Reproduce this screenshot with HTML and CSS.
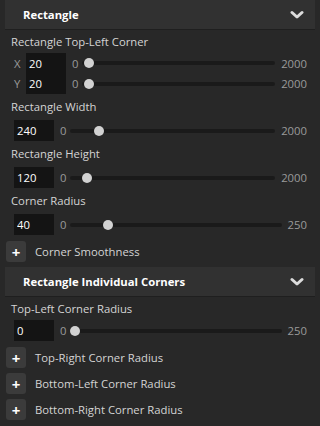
FILE: index.html
```html
<!DOCTYPE html>
<html lang="en">
<head>
    <meta charset="UTF-8">
    <meta name="viewport" content="width=device-width, initial-scale=1.0">
    <title>Rectangle properties</title>
    <link rel="stylesheet" href="styles.css">
</head>
<body>
    <div class="panel">
        <div class="section-header">
            <span>Rectangle</span>
            <svg class="chevron" width="14" height="10" viewBox="0 0 14 10"><polyline points="2,2.5 7,7 12,2.5" /></svg>
        </div>

        <div class="field first">
            <div class="field-label">Rectangle Top-Left Corner</div>
            <div class="xy">
                <div class="control">
                    <span class="axis">X</span>
                    <input class="num axis-num" type="text" value="20">
                    <span class="min">0</span>
                    <div class="track"><span class="knob" style="--v:0.01"></span></div>
                    <span class="max">2000</span>
                </div>
                <div class="control">
                    <span class="axis">Y</span>
                    <input class="num axis-num" type="text" value="20">
                    <span class="min">0</span>
                    <div class="track"><span class="knob" style="--v:0.01"></span></div>
                    <span class="max">2000</span>
                </div>
            </div>
        </div>

        <div class="field">
            <div class="field-label">Rectangle Width</div>
            <div class="control">
                <input class="num" type="text" value="240">
                <span class="min">0</span>
                <div class="track"><span class="knob" style="--v:0.12"></span></div>
                <span class="max">2000</span>
            </div>
        </div>

        <div class="field">
            <div class="field-label">Rectangle Height</div>
            <div class="control">
                <input class="num" type="text" value="120">
                <span class="min">0</span>
                <div class="track"><span class="knob" style="--v:0.06"></span></div>
                <span class="max">2000</span>
            </div>
        </div>

        <div class="field">
            <div class="field-label">Corner Radius</div>
            <div class="control">
                <input class="num" type="text" value="40">
                <span class="min">0</span>
                <div class="track"><span class="knob" style="--v:0.16"></span></div>
                <span class="max">250</span>
            </div>
        </div>

        <div class="add-row first-add">
            <button class="add-btn">+</button>
            <span>Corner Smoothness</span>
        </div>

        <div class="section-header second">
            <span>Rectangle Individual Corners</span>
            <svg class="chevron" width="14" height="10" viewBox="0 0 14 10"><polyline points="2,2.5 7,7 12,2.5" /></svg>
        </div>

        <div class="field first tight">
            <div class="field-label">Top-Left Corner Radius</div>
            <div class="control">
                <input class="num" type="text" value="0">
                <span class="min">0</span>
                <div class="track"><span class="knob" style="--v:0"></span></div>
                <span class="max">250</span>
            </div>
        </div>

        <div class="add-row first-add">
            <button class="add-btn">+</button>
            <span>Top-Right Corner Radius</span>
        </div>
        <div class="add-row">
            <button class="add-btn">+</button>
            <span>Bottom-Left Corner Radius</span>
        </div>
        <div class="add-row">
            <button class="add-btn">+</button>
            <span>Bottom-Right Corner Radius</span>
        </div>
    </div>
</body>
</html>
```

FILE: styles.css
```css
* {
    box-sizing: border-box;
    margin: 0;
    padding: 0;
}

body {
    background-color: #282828;
    font-family: "Open Sans", "Noto Sans", sans-serif;
    font-size: 11.3px;
    color: #d4d4d4;
    width: 320px;
    height: 426px;
    overflow: hidden;
}

.panel {
    padding: 0 5px;
}

.section-header {
    display: flex;
    align-items: center;
    justify-content: space-between;
    height: 30px;
    padding: 0 11px 0 18px;
    background-color: #313131;
    border-bottom: 1px solid #1f1f1f;
    color: #ffffff;
    font-weight: bold;
    font-size: 11.3px;
}

.section-header.second {
    margin-top: 5px;
}

.chevron polyline {
    fill: none;
    stroke: #dcdcdc;
    stroke-width: 3;
    stroke-linecap: round;
    stroke-linejoin: round;
}

.field {
    margin-top: 5px;
    padding-left: 6px;
    padding-right: 8px;
}

.field.first {
    margin-top: 4px;
}

.field-label {
    height: 16px;
    line-height: 16px;
    margin-bottom: 5px;
}

.field.tight .field-label {
    margin-bottom: 3px;
}

.xy {
    margin-top: -2px;
}

.control {
    display: flex;
    align-items: center;
    height: 21px;
}

.xy .control {
    height: 20.5px;
}

.axis {
    width: 15px;
    padding-left: 3px;
    color: #9a9a9a;
}

.num {
    width: 40px;
    height: 100%;
    border: none;
    outline: none;
    background-color: #141414;
    color: #ffffff;
    font-family: inherit;
    font-size: 11.3px;
    padding-left: 3px;
    margin-left: 3px;
}

.axis-num {
    margin-left: 0;
}

.min {
    margin-left: 6px;
    margin-right: 4px;
    color: #9a9a9a;
}

.max {
    margin-left: 6px;
    color: #9a9a9a;
}

.track {
    position: relative;
    flex: 1;
    height: 4px;
    border-radius: 2px;
    background-color: #1a1a1a;
}

.knob {
    position: absolute;
    top: -3px;
    left: calc(var(--v) * (100% - 10px));
    width: 10px;
    height: 10px;
    border-radius: 50%;
    background-color: #d2d2d2;
}

.add-row {
    display: flex;
    align-items: center;
    gap: 9px;
    height: 21px;
    margin-top: 5px;
    padding-left: 1px;
}

.add-row.first-add {
    margin-top: 6px;
}

.add-btn {
    width: 20px;
    height: 21px;
    border: none;
    border-radius: 3px;
    background-color: #3b3b3b;
    color: #ffffff;
    font-family: inherit;
    font-size: 15px;
    font-weight: bold;
    line-height: 20px;
}
```
